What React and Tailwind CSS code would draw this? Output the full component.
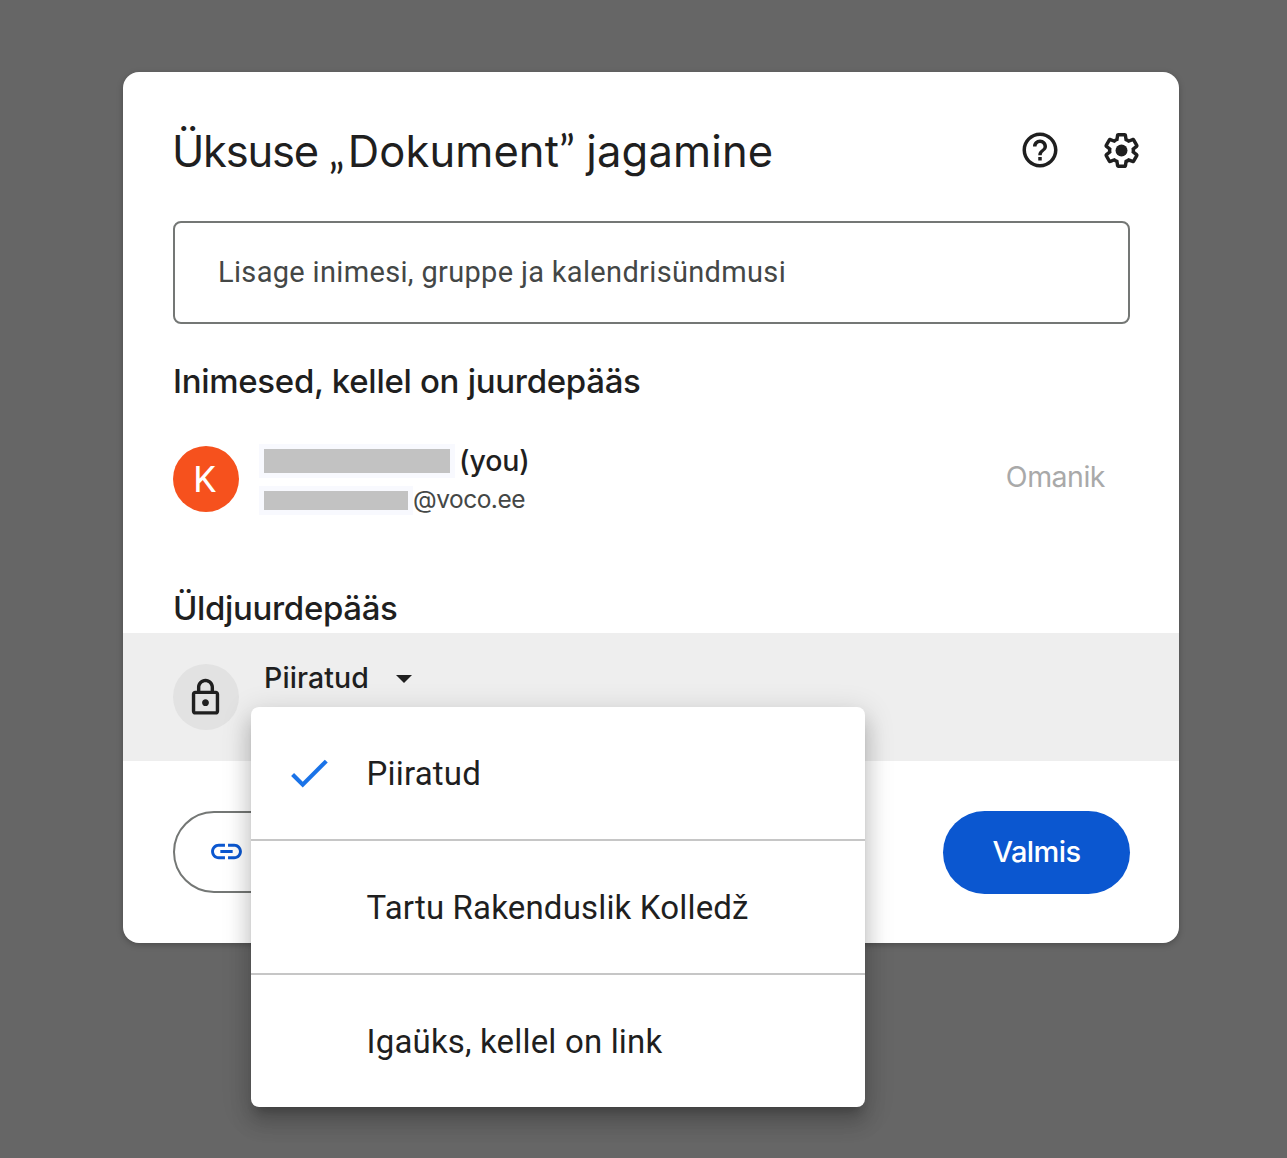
import React from "react";

function Icon({ d, className, children }) {
  return (
    <svg viewBox="0 0 24 24" fill="currentColor" aria-hidden="true" className={className}>
      <path d={d} />
      {children}
    </svg>
  );
}

const HELP =
  "M11 18h2v-2h-2v2zm1-16C6.48 2 2 6.48 2 12s4.48 10 10 10 10-4.48 10-10S17.52 2 12 2zm0 18c-4.41 0-8-3.59-8-8s3.59-8 8-8 8 3.59 8 8-3.59 8-8 8zm0-14c-2.21 0-4 1.79-4 4h2c0-1.1.9-2 2-2s2 .9 2 2c0 2-3 1.75-3 5h2c0-2.25 3-2.5 3-5 0-2.21-1.79-4-4-4z";
const GEAR =
  "M13.85 22.25h-3.7c-.74 0-1.36-.54-1.45-1.27l-.27-1.89c-.27-.14-.53-.29-.79-.46l-1.8.72c-.7.26-1.47-.03-1.81-.65L2.2 15.53c-.35-.66-.2-1.44.36-1.88l1.53-1.19c-.01-.15-.02-.3-.02-.46 0-.15.01-.31.02-.46l-1.52-1.19c-.59-.45-.74-1.26-.37-1.88l1.85-3.19c.34-.62 1.11-.9 1.79-.63l1.81.73c.26-.17.52-.32.78-.46l.27-1.91c.09-.7.71-1.25 1.44-1.25h3.7c.74 0 1.36.54 1.45 1.27l.27 1.89c.27.14.53.29.79.46l1.8-.72c.71-.26 1.48.03 1.82.65l1.84 3.18c.36.66.2 1.44-.36 1.88l-1.52 1.19c.01.15.02.3.02.46s-.01.31-.02.46l1.52 1.19c.56.45.72 1.23.37 1.86l-1.86 3.22c-.34.62-1.11.9-1.8.63l-1.8-.72c-.26.17-.52.32-.78.46l-.27 1.91c-.1.68-.72 1.22-1.46 1.22zm-3.23-2h2.76l.37-2.55.53-.22c.44-.18.88-.44 1.34-.78l.45-.34 2.38.96 1.38-2.4-2.03-1.58.07-.56c.03-.26.06-.51.06-.78s-.03-.53-.06-.78l-.07-.56 2.03-1.58-1.39-2.4-2.39.96-.45-.35c-.42-.32-.87-.58-1.33-.77l-.52-.22-.37-2.55h-2.76l-.37 2.55-.53.21c-.44.19-.88.44-1.34.79l-.45.33-2.38-.95-1.39 2.39 2.03 1.58-.07.56a7 7 0 0 0-.06.79c0 .26.02.53.06.78l.07.56-2.03 1.58 1.38 2.4 2.39-.96.45.35c.43.33.86.58 1.33.77l.53.22.38 2.55z";
const LOCK =
  "M18 8h-1V6c0-2.76-2.24-5-5-5S7 3.24 7 6v2H6c-1.1 0-2 .9-2 2v10c0 1.1.9 2 2 2h12c1.1 0 2-.9 2-2V10c0-1.1-.9-2-2-2zM9 6c0-1.66 1.34-3 3-3s3 1.34 3 3v2H9V6zm9 14H6V10h12v10zm-6-3c1.1 0 2-.9 2-2s-.9-2-2-2-2 .9-2 2 .9 2 2 2z";
const LINK =
  "M3.9 12c0-1.71 1.39-3.1 3.1-3.1h4V7H7c-2.76 0-5 2.24-5 5s2.24 5 5 5h4v-1.9H7c-1.71 0-3.1-1.39-3.1-3.1zM8 13h8v-2H8v2zm9-6h-4v1.9h4c1.71 0 3.1 1.39 3.1 3.1s-1.39 3.1-3.1 3.1h-4V17h4c2.76 0 5-2.24 5-5s-2.24-5-5-5z";
const CHECK = "M9 16.17 4.83 12l-1.42 1.41L9 19 21 7l-1.41-1.41z";

const OPTIONS = ["Piiratud", "Tartu Rakenduslik Kolledž", "Igaüks, kellel on link"];

function AccessMenu() {
  return (
    <ul className="absolute left-[128px] top-[74px] z-10 w-[614px] divide-y-2 divide-[#c6c6c6] rounded-lg bg-white shadow-[0_10px_10px_-6px_rgba(0,0,0,0.2),0_16px_20px_2px_rgba(0,0,0,0.14),0_6px_28px_4px_rgba(0,0,0,0.12)]">
      {OPTIONS.map((label, i) => (
        <li
          key={label}
          className="flex h-[134px] items-center pl-[33px] font-[Roboto,sans-serif] text-[33px] leading-10 tracking-[0.17px] last:h-[132px]"
        >
          <span className="flex w-[82.6px]">
            {i === 0 && <Icon d={CHECK} className="size-[50px] text-[#1a73e8]" />}
          </span>
          <span className="pt-[2px]">{label}</span>
        </li>
      ))}
    </ul>
  );
}

export default function App() {
  return (
    <div className="flex h-[1158px] w-[1287px] items-start overflow-hidden bg-[#666666] pl-[123px] pt-[72px] font-[Inter,sans-serif] text-[#1f1f1f]">
      <div className="flex h-[871px] w-[1056px] flex-col rounded-2xl bg-white shadow-[0_2px_6px_rgba(0,0,0,0.25)]">
        <header className="mt-[50px] flex h-[57px] items-center pl-[49px] pr-[37px]">
          <h1 className="flex-1 whitespace-nowrap pb-px text-[43.5px] font-normal leading-[56px] tracking-[0.1px]">
            <span className="tracking-[-1.25px]">Üksuse </span>
            <span className="font-[Lato,sans-serif] tracking-[3px]">„</span>Dokument
            <span className="font-[Lato,sans-serif] tracking-[-1px]">”</span>
            <span className="tracking-[0.15px]"> jagamine</span>
          </h1>
          <Icon d={HELP} className="mb-px mr-[40.5px] size-[42px]" />
          <Icon d={GEAR} className="size-[41px]">
            <circle cx="12" cy="12" r="3.5" />
          </Icon>
        </header>

        <div className="ml-[50px] mr-[49px] mt-[42px] flex h-[103px] shrink-0 items-center rounded-lg border-2 border-[#747775] pl-[43px] font-[Roboto,sans-serif] text-[29px] tracking-[0.33px] text-[#444746]">
          Lisage inimesi, gruppe ja kalendrisündmusi
        </div>

        <h2 className="ml-[50px] mt-[33px] text-[33px] font-medium leading-[48px] tracking-[-0.3px]">
          Inimesed, kellel on juurdepääs
        </h2>

        <div className="ml-[50px] mr-[74px] mt-[38px] flex h-[72px] items-center">
          <div className="flex size-[66px] items-center justify-center rounded-full bg-[#f6511d] pr-[3px] pt-[2px] font-[Roboto,sans-serif] text-[36px] leading-none text-white">
            K
          </div>
          <div className="ml-5 flex flex-1 flex-col gap-2">
            <div className="flex h-[34px] items-center">
              <div className="flex h-[34px] w-[196px] items-center bg-[#f8f9fe] pl-[5px]">
                <div className="h-6 w-[186px] bg-[#c2c2c2]" />
              </div>
              <span className="ml-1 text-[28.5px] font-medium leading-[34px] tracking-[-0.1px]">(you)</span>
            </div>
            <div className="flex h-[29px] items-center">
              <div className="flex h-[29px] w-[154px] items-center bg-[#f8f9fe] pl-[5px]">
                <div className="h-[19px] w-36 bg-[#c2c2c2]" />
              </div>
              <span className="pb-[2px] text-[24.5px] leading-[29px] tracking-[-0.5px] text-[#444746]">@voco.ee</span>
            </div>
          </div>
          <span className="pb-[5px] text-[28.5px] leading-9 tracking-[-0.5px] text-[#a9a9a9]">Omanik</span>
        </div>

        <h2 className="ml-[50px] mt-[69px] text-[33px] font-medium leading-[48px] tracking-[-0.35px]">
          Üldjuurdepääs
        </h2>

        <section className="relative mt-px flex h-32 shrink-0 items-center bg-[#eeeeee] pl-[50px]">
          <div className="flex size-[66px] items-center justify-center rounded-full bg-[#e2e2e2] pr-px">
            <Icon d={LOCK} className="size-[41px]" />
          </div>
          <button className="mb-[38px] ml-[25px] flex items-center gap-[27px] text-[28.5px] font-medium leading-9 tracking-[0.1px]">
            Piiratud
            <svg viewBox="0 0 16 8" fill="currentColor" aria-hidden="true" className="mt-[2px] h-2 w-4">
              <path d="M0 0h16L8 8z" />
            </svg>
          </button>
          <AccessMenu />
        </section>

        <footer className="ml-[50px] mr-[49px] mt-[50px] flex justify-between">
          <button className="flex h-[82px] w-[330px] items-center rounded-full border-2 border-[#747775] pb-px pl-[33px] text-[#0b57d0]">
            <Icon d={LINK} className="size-[37px]" />
          </button>
          <button className="h-[83px] w-[187px] rounded-full bg-[#0b57d0] pb-[2px] text-[29px] font-medium tracking-[-0.6px] text-white">
            Valmis
          </button>
        </footer>
      </div>
    </div>
  );
}
